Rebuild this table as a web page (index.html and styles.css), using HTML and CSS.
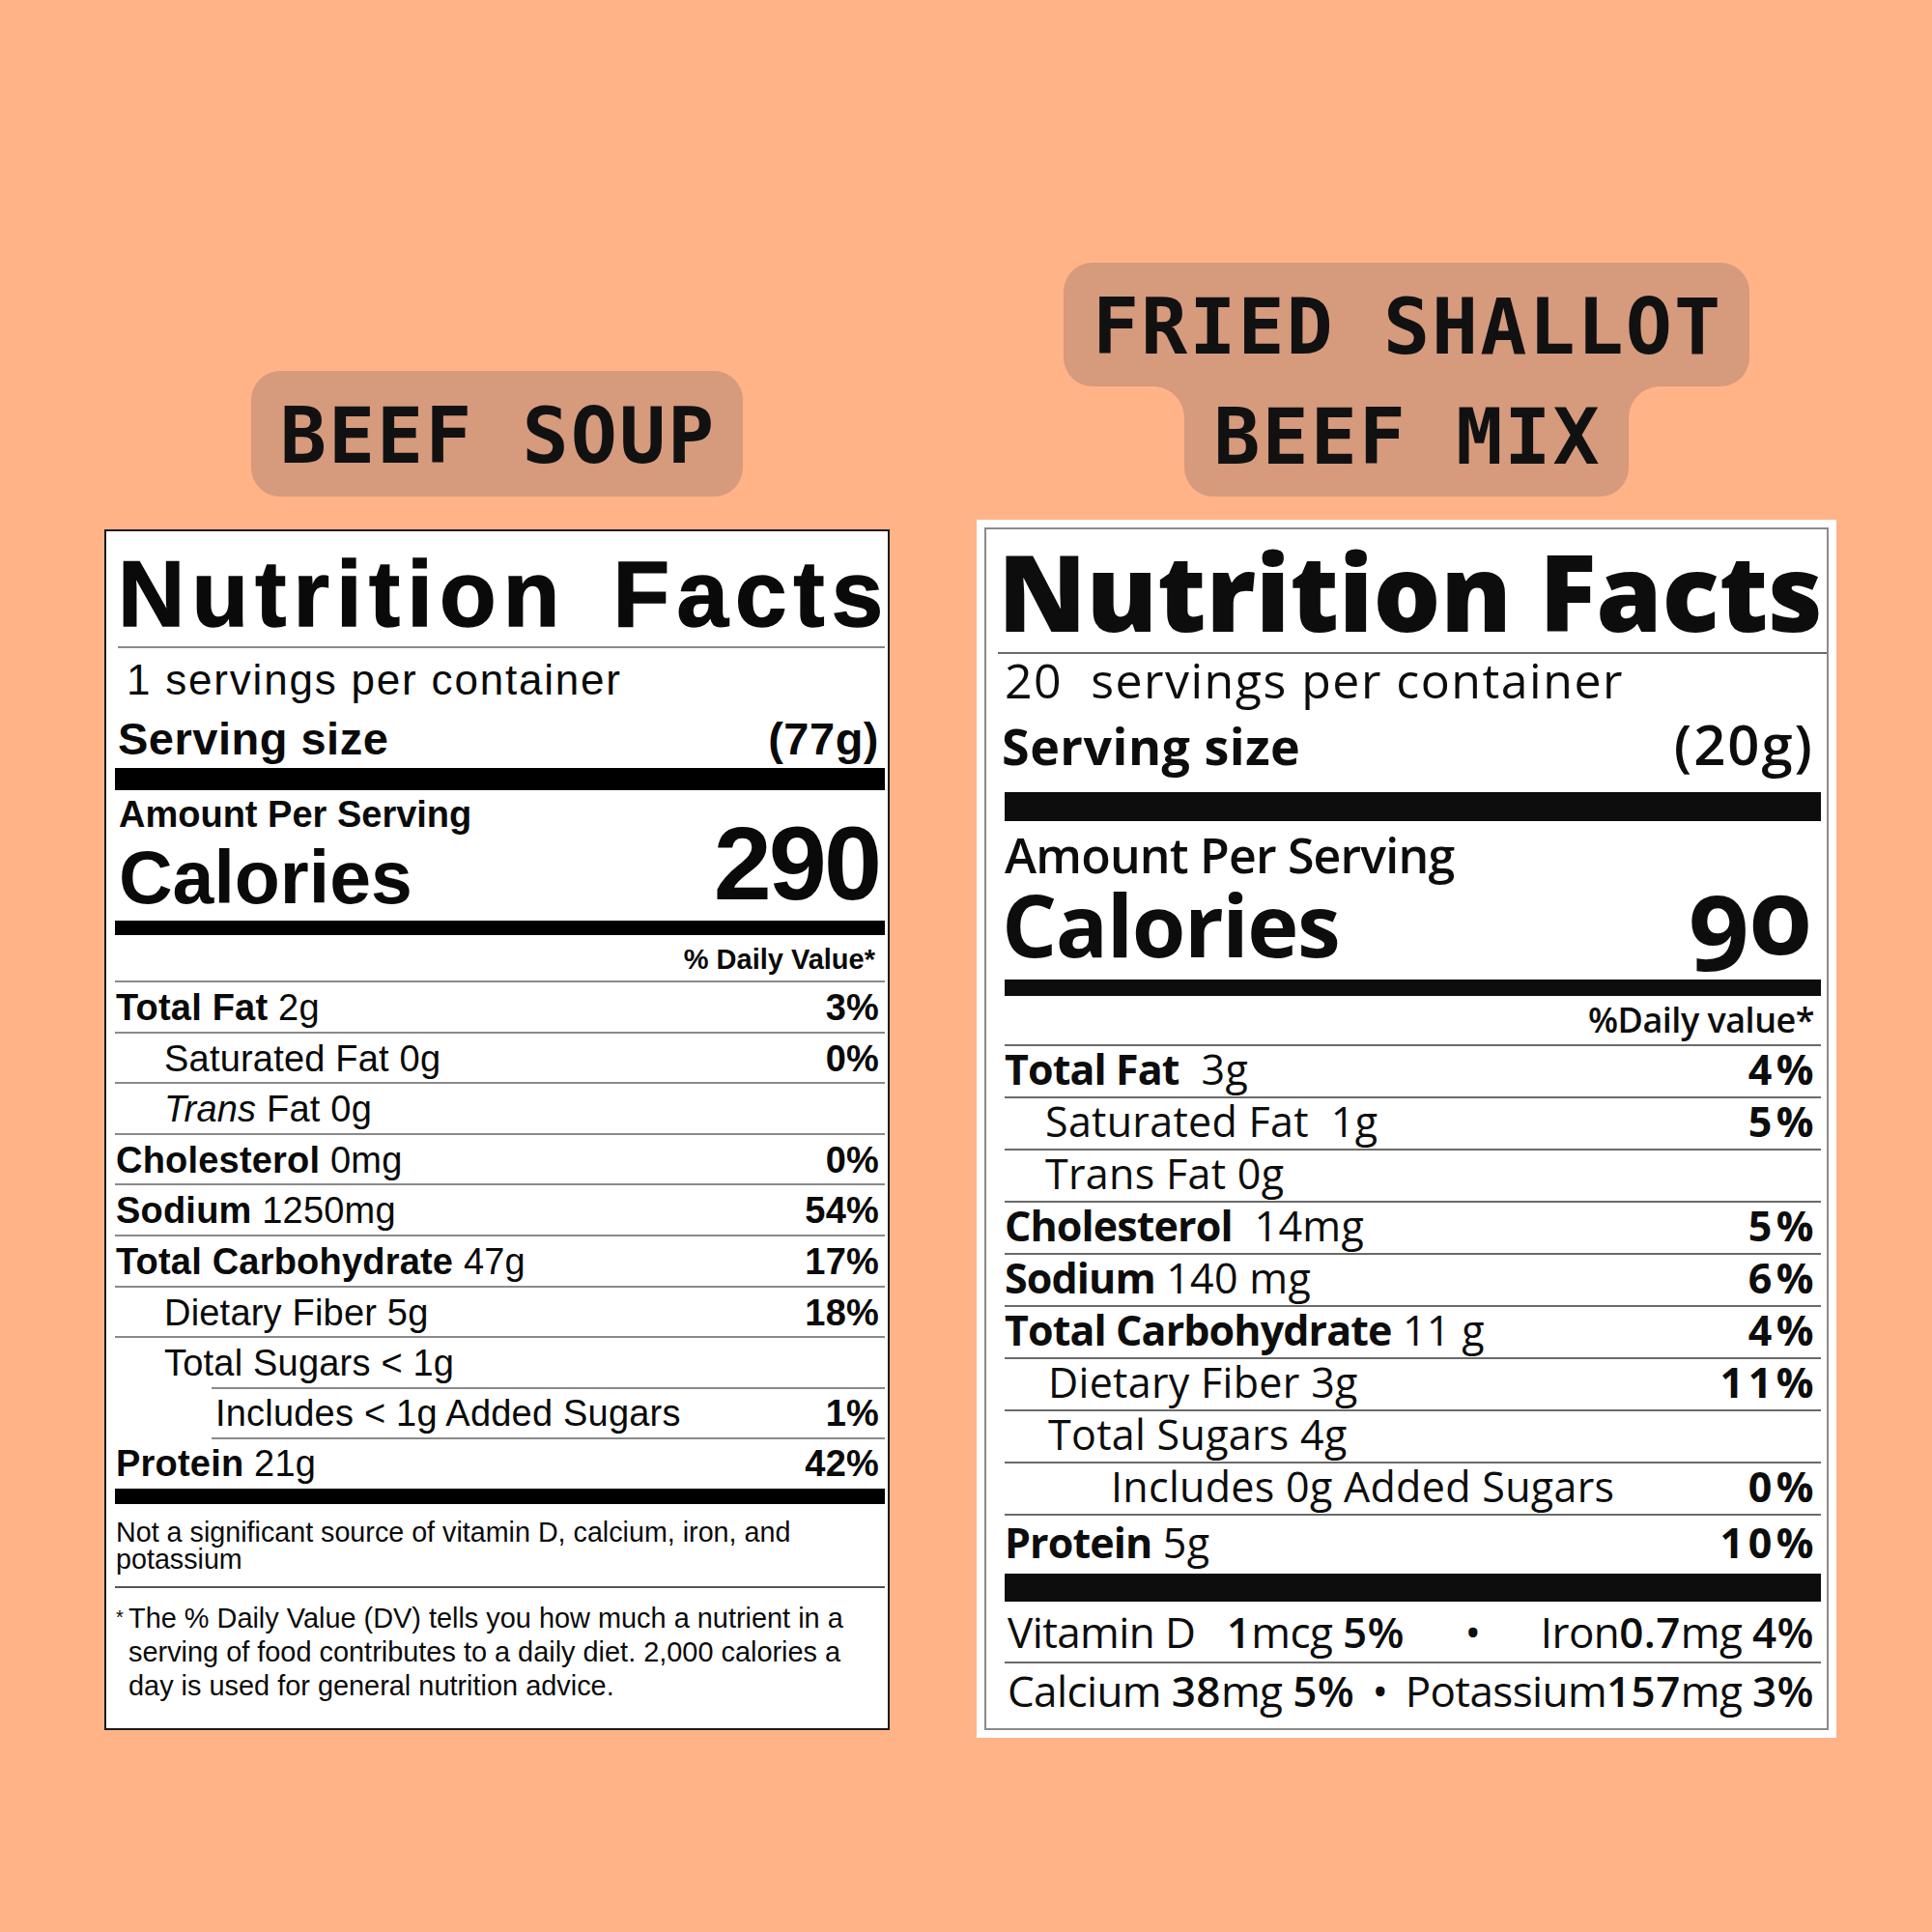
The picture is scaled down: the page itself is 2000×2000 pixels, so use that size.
FILE: index.html
```html
<!DOCTYPE html>
<html>
<head>
<meta charset="utf-8">
<link rel="stylesheet" href="styles.css">
</head>
<body>
<div class="page">
  <div class="tag tag-left">BEEF SOUP</div>
  <div class="tag-stack">
    <div class="tag tag-top">FRIED SHALLOT</div>
    <div class="tag tag-bottom">BEEF MIX</div>
  </div>

  <section class="nf1">
    <h1 class="nf1-title">Nutrition Facts</h1>
    <div class="nf1-servings">1 servings per container</div>
    <div class="nf1-size"><span>Serving size</span><span>(77g)</span></div>
    <div class="nf1-cal">
      <div class="nf1-cal-left">
        <div class="nf1-amount">Amount Per Serving</div>
        <div class="nf1-calories">Calories</div>
      </div>
      <div class="nf1-calnum">290</div>
    </div>
    <div class="nf1-dv">% Daily Value*</div>
    <div class="nf1-row"><span><b>Total Fat</b> 2g</span><b>3%</b></div>
    <div class="nf1-row ind1"><span>Saturated Fat 0g</span><b>0%</b></div>
    <div class="nf1-row ind1"><span><i>Trans</i> Fat 0g</span></div>
    <div class="nf1-row"><span><b>Cholesterol</b> 0mg</span><b>0%</b></div>
    <div class="nf1-row"><span><b>Sodium</b> 1250mg</span><b>54%</b></div>
    <div class="nf1-row"><span><b>Total Carbohydrate</b> 47g</span><b>17%</b></div>
    <div class="nf1-row ind1"><span>Dietary Fiber 5g</span><b>18%</b></div>
    <div class="nf1-row ind1 nf1-sugars"><span>Total Sugars &lt; 1g</span></div>
    <div class="nf1-row nf1-added"><span>Includes &lt; 1g Added Sugars</span><b>1%</b></div>
    <div class="nf1-row nf1-protein"><span><b>Protein</b> 21g</span><b>42%</b></div>
    <p class="nf1-note">Not a significant source of vitamin D, calcium, iron, and potassium</p>
    <p class="nf1-foot"><span class="star">*</span>The % Daily Value (DV) tells you how much a nutrient in a serving of food contributes to a daily diet. 2,000 calories a day is used for general nutrition advice.</p>
  </section>

  <section class="nf2">
    <div class="nf2-inner">
      <h1 class="nf2-title">Nutrition Facts</h1>
      <div class="nf2-servings">20&nbsp; servings per container</div>
      <div class="nf2-size"><span class="b">Serving size</span><span class="sb">(20g)</span></div>
      <div class="nf2-cal">
        <div class="nf2-cal-left">
          <div class="nf2-amount">Amount Per Serving</div>
          <div class="nf2-calories">Calories</div>
        </div>
        <div class="nf2-calnum">90</div>
      </div>
      <div class="nf2-dv">%Daily value*</div>
      <div class="nf2-row"><span><b>Total Fat</b>&nbsp; 3g</span><b class="pct">4%</b></div>
      <div class="nf2-row ind1"><span>Saturated Fat&nbsp; 1g</span><b class="pct">5%</b></div>
      <div class="nf2-row ind1"><span>Trans Fat 0g</span></div>
      <div class="nf2-row"><span><b>Cholesterol</b>&nbsp; 14mg</span><b class="pct">5%</b></div>
      <div class="nf2-row"><span><b>Sodium</b> 140 mg</span><b class="pct">6%</b></div>
      <div class="nf2-row"><span><b>Total Carbohydrate</b> 11 g</span><b class="pct">4%</b></div>
      <div class="nf2-row ind1b"><span>Dietary Fiber 3g</span><b class="pct">11%</b></div>
      <div class="nf2-row ind1b"><span>Total Sugars 4g</span></div>
      <div class="nf2-row ind2"><span>Includes 0g Added Sugars</span><b class="pct">0%</b></div>
      <div class="nf2-row nf2-protein"><span><b>Protein</b> 5g</span><b class="pct">10%</b></div>
      <div class="nf2-vit">
        <span>Vitamin D&nbsp;&nbsp; <b>1</b>mcg <b>5%</b></span>
        <span>•</span>
        <span>Iron<b>0.7</b>mg <b>4%</b></span>
      </div>
      <div class="nf2-min">
        <span>Calcium <b>38</b>mg <b>5%</b></span>
        <span>•</span>
        <span>Potassium<b>157</b>mg <b>3%</b></span>
      </div>
    </div>
  </section>
</div>
</body>
</html>
```

FILE: styles.css
```css
* { box-sizing: border-box; margin: 0; padding: 0; }
body { margin: 0; background: #ffb387; }

.page {
  width: 2000px;
  height: 2000px;
  background: #ffb387;
  display: grid;
  grid-template-columns: 813px 890px;
  grid-template-rows: 242px auto;
  column-gap: 90px;
  padding: 272px 0 0 108px;
  align-items: start;
}

/* ---------- tags ---------- */
.tag {
  font-family: "DejaVu Sans Mono", monospace;
  font-weight: 700;
  font-size: 80px;
  letter-spacing: 2px;
  color: #111;
  background: #d69a7d;
  padding: 0 28px 0 30px;
  border-radius: 30px;
  white-space: pre;
}
.tag-left {
  grid-column: 1;
  grid-row: 1;
  justify-self: center;
  align-self: end;
  height: 130px;
  line-height: 124px;
  padding-top: 6px;
}
.tag-stack {
  grid-column: 2;
  grid-row: 1;
  justify-self: center;
  align-self: end;
  display: flex;
  flex-direction: column;
  align-items: center;
}
.tag-top {
  height: 128px;
  line-height: 122px;
  padding-top: 6px;
}
.tag-bottom {
  position: relative;
  height: 114px;
  line-height: 105px;
  border-radius: 0 0 30px 30px;
}
.tag-bottom::before,
.tag-bottom::after {
  content: "";
  position: absolute;
  top: 0;
  width: 32px;
  height: 32px;
}
.tag-bottom::before {
  left: -32px;
  background: radial-gradient(circle at 0 100%, transparent 31.5px, #d69a7d 32px);
}
.tag-bottom::after {
  right: -32px;
  background: radial-gradient(circle at 100% 100%, transparent 31.5px, #d69a7d 32px);
}

/* ---------- left label ---------- */
.nf1 {
  grid-column: 1;
  grid-row: 2;
  margin-top: 34px;
  background: #fff;
  border: 2px solid #1a1a1a;
  padding: 0 3px 0 9px;
  font-family: "Liberation Sans", Arial, sans-serif;
  color: #0a0a0a;
}
.nf1 b { font-weight: 700; }
.nf1-title {
  font-size: 96px;
  font-weight: 700;
  line-height: 109px;
  padding-top: 10px;
  letter-spacing: 7.2px;
  word-spacing: 14px;
  margin-left: 3px;
  white-space: nowrap;
  border-bottom: 2px solid #8a8a8a;
  -webkit-text-stroke: 1.5px #0a0a0a;
}
.nf1-servings {
  font-size: 44px;
  line-height: 66px;
  letter-spacing: 1.8px;
  padding-left: 12px;
}
.nf1-size {
  display: flex;
  justify-content: space-between;
  font-size: 47px;
  font-weight: 700;
  line-height: 55px;
  letter-spacing: 0.5px;
  padding: 0 6px 3px 3px;
  border-bottom: 23px solid #000;
}
.nf1-cal {
  display: flex;
  justify-content: space-between;
  align-items: flex-end;
  border-bottom: 15px solid #000;
  padding: 0 6px 0 4px;
}
.nf1-amount {
  font-size: 38px;
  font-weight: 700;
  line-height: 50px;
}
.nf1-calories {
  font-size: 77px;
  font-weight: 700;
  line-height: 80px;
  padding-bottom: 5px;
}
.nf1-calnum {
  font-size: 108px;
  font-weight: 700;
  line-height: 100px;
  letter-spacing: -3px;
  padding-bottom: 9px;
}
.nf1-dv {
  text-align: right;
  font-size: 29px;
  font-weight: 700;
  line-height: 43px;
  padding: 4px 10px 0 0;
  border-bottom: 2px solid #8a8a8a;
}
.nf1-row {
  display: flex;
  justify-content: space-between;
  font-size: 38px;
  line-height: 47.6px;
  letter-spacing: 0.2px;
  padding: 3px 6px 0 1px;
  border-bottom: 2px solid #8a8a8a;
  white-space: nowrap;
}
.nf1-row.ind1 { padding-left: 51px; }
.nf1-row i { font-style: italic; }
.nf1-sugars { border-bottom: none; }
.nf1-added {
  margin-left: 100px;
  padding: 0 6px 0 4px;
  line-height: 50.6px;
  border-top: 2px solid #8a8a8a;
}
.nf1-protein {
  padding-top: 0;
  line-height: 50.6px;
  border-bottom: 16px solid #000;
}
.nf1-note {
  font-size: 28.7px;
  line-height: 28px;
  margin-top: 15px;
  padding: 0 0 14px 1px;
  border-bottom: 2px solid #555;
}
.nf1-foot {
  font-size: 28.9px;
  line-height: 35px;
  margin-top: 13px;
  padding: 0 14px 26px 14px;
}
.star {
  display: inline-block;
  width: 13px;
  margin-left: -13px;
  font-size: 20px;
  vertical-align: 4px;
}

/* ---------- right label ---------- */
.nf2 {
  grid-column: 2;
  grid-row: 2;
  margin-top: 24px;
  background: #fff;
  padding: 8px;
  font-family: "Open Sans", "Noto Sans", sans-serif;
  color: #0d0d0d;
}
.nf2-inner {
  border: 2px solid #8a8a8a;
  padding: 0 6px 0 19px;
}
.nf2 b { font-weight: 700; }
.nf2-title {
  font-size: 110px;
  font-weight: 800;
  line-height: 127px;
  letter-spacing: -0.2px;
  margin-left: -7px;
  margin-right: -6px;
  white-space: nowrap;
  border-bottom: 2px solid #6a6a6a;
}
.nf2-servings {
  font-size: 50px;
  line-height: 55px;
  letter-spacing: 1.5px;
  white-space: nowrap;
}
.nf2-size {
  display: flex;
  justify-content: space-between;
  align-items: flex-start;
  font-size: 52px;
  line-height: 80px;
  padding: 0 7px 8px 0;
  border-bottom: 30px solid #0d0d0d;
}
.nf2-size .b { font-weight: 700; letter-spacing: 0.5px; margin-left: -3px; }
.nf2-size .sb { font-weight: 600; font-size: 58px; line-height: 75px; letter-spacing: 2px; }
.nf2-cal {
  display: flex;
  justify-content: space-between;
  align-items: flex-end;
  border-bottom: 17px solid #0d0d0d;
  padding-right: 10px;
}
.nf2-amount {
  font-size: 50px;
  font-weight: 600;
  line-height: 70px;
  letter-spacing: -0.8px;
}
.nf2-calories {
  font-size: 90px;
  font-weight: 700;
  line-height: 72px;
  letter-spacing: -1.5px;
  padding-bottom: 22px;
  margin-left: -3px;
}
.nf2-calnum {
  font-size: 110px;
  font-weight: 700;
  line-height: 100px;
  padding-bottom: 19px;
  font-variant-numeric: oldstyle-nums;
}
.nf2-dv {
  text-align: right;
  font-size: 36px;
  font-weight: 600;
  line-height: 50px;
  padding-right: 7px;
  letter-spacing: -0.5px;
  border-bottom: 2px solid #6a6a6a;
}
.nf2-row {
  display: flex;
  justify-content: space-between;
  align-items: flex-start;
  height: 54px;
  font-size: 43px;
  font-weight: 500;
  line-height: 48px;
  letter-spacing: 0.3px;
  padding: 0 7px 4px 0;
  border-bottom: 2px solid #6a6a6a;
  white-space: nowrap;
}
.nf2-row span b { letter-spacing: -0.9px; }
.nf2-row.ind1 { padding-left: 42px; }
.nf2-row.ind1b { padding-left: 45px; }
.nf2-row.ind2 { padding-left: 110px; }
.nf2-row .pct {
  font-size: 43px;
  letter-spacing: 4.5px;
  margin-right: -4px;
}
.nf2-protein {
  height: 89px;
  line-height: 56px;
  border-bottom: 29px solid #0d0d0d;
}
.nf2-vit,
.nf2-min {
  display: flex;
  justify-content: space-between;
  font-size: 44px;
  letter-spacing: -0.6px;
  padding: 0 7px 0 3px;
  white-space: pre;
}
.nf2-vit b,
.nf2-min b { font-weight: 600; letter-spacing: 0.4px; }
.nf2-vit {
  line-height: 62px;
  border-bottom: 2px solid #6a6a6a;
}
.nf2-min {
  line-height: 56px;
  padding-bottom: 11px;
}
```
